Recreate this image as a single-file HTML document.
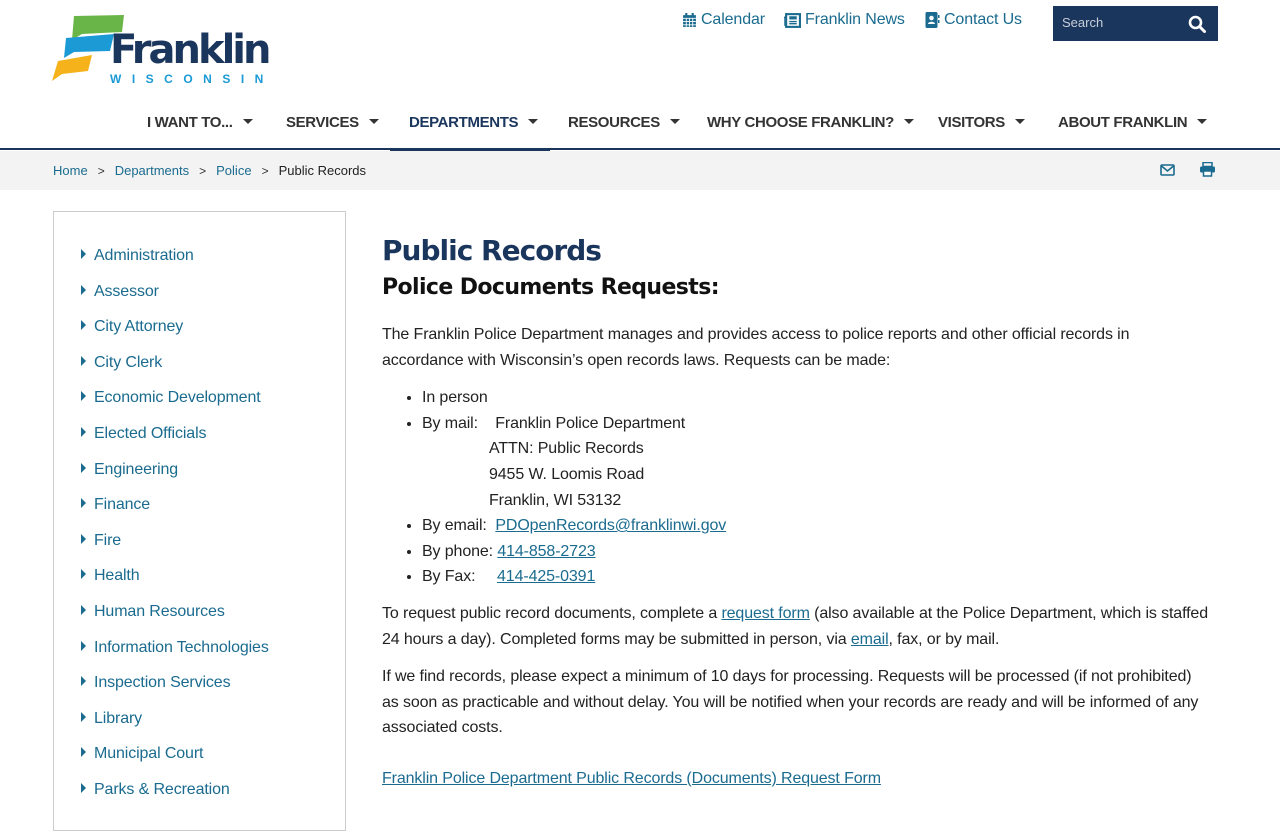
<!DOCTYPE html>
<html><head><meta charset="utf-8"><style>
*{box-sizing:border-box;margin:0;padding:0}
body{width:1280px;height:800px;overflow:hidden;background:#fff;font-family:"Liberation Sans",sans-serif;color:#222;letter-spacing:-0.12px}
a{color:#1a6b8f;text-decoration:underline}
.top{position:absolute;top:11px;font-size:16px;color:#1a6b8f;display:flex;align-items:center;gap:4px}
.search{position:absolute;left:1053px;top:6px;width:165px;height:35px;background:#1b365d;color:#c8cfd9;font-size:13px;padding:9px 0 0 9px;letter-spacing:0}
.nav{position:absolute;top:0;left:0;width:1280px;height:150px;border-bottom:2px solid #1b365d}
.nav span{position:absolute;top:114px;font-size:15px;font-weight:bold;color:#333;letter-spacing:-0.35px}
.nav span:after{content:"";display:inline-block;margin-left:10px;border-left:5px solid transparent;border-right:5px solid transparent;border-top:5px solid #333;vertical-align:3px}
.nav span.act{color:#1b365d}
.crumb{position:absolute;top:151px;left:0;width:1280px;height:39px;background:#f3f3f3;font-size:13px;padding:12px 0 0 53px;letter-spacing:0}
.crumb a{text-decoration:none;color:#1a6b8f}
.crumb i{font-style:normal;margin:0 10px;color:#333;font-size:12px}
.side{position:absolute;left:53px;top:211px;width:293px;height:620px;border:1px solid #ccc}
.side div{position:absolute;left:27px;top:0;font-size:16px;color:#1a6b8f;margin-top:1px}
.side div:before{content:"";display:inline-block;border-top:5px solid transparent;border-bottom:5px solid transparent;border-left:5px solid #1a6b8f;margin-right:8px;vertical-align:1px}
.main{position:absolute;left:382px;top:232px;width:850px;font-size:16px;line-height:25.6px}
h1{font-family:"DejaVu Sans",sans-serif;font-weight:bold;color:#1b365d;font-size:28px;line-height:38px;letter-spacing:-1px}
h2{font-family:"DejaVu Sans",sans-serif;font-size:22px;line-height:36px;color:#111;margin-bottom:16px;letter-spacing:-0.6px}
p{margin-bottom:12px}
ul{margin:0 0 11px 40px}
</style></head><body>
<div class="nav">
<span style="left:147px">I WANT TO...</span>
<span style="left:286px">SERVICES</span>
<span class="act" style="left:409px">DEPARTMENTS</span>
<span style="left:568px">RESOURCES</span>
<span style="left:707px">WHY CHOOSE FRANKLIN?</span>
<span style="left:938px">VISITORS</span>
<span style="left:1058px">ABOUT FRANKLIN</span>
</div>
<div style="position:absolute;left:390px;top:148px;width:160px;height:4px;background:#1b365d"></div>
<svg style="position:absolute;left:52px;top:14px" width="80" height="68" viewBox="0 0 80 68">
<path d="M22 2 L72 1 L70 18 L30 20 L20 26 Z" fill="#6ab547"/>
<path d="M14 24 L62 20 L58 37 L22 38 L12 44 Z" fill="#1b9ad6"/>
<path d="M6 47 L40 41 L36 57 L10 60 L0 67 Z" fill="#f5b21b"/>
</svg>
<div style="position:absolute;left:110px;top:27px;font-family:'DejaVu Sans',sans-serif;font-size:40px;font-weight:bold;color:#1b365d;letter-spacing:-3px;line-height:46px">Franklin</div>
<div style="position:absolute;left:110px;top:72px;font-size:12px;font-weight:bold;color:#1b9ad6;letter-spacing:10.5px">WISCONSIN</div>
<div class="top" style="left:682px"><svg width="15" height="15" viewBox="0 0 14 14"><rect x="1" y="2" width="12" height="11" fill="#1a6b8f"/><path d="M1 5h12M1 8h12M1 11h12M4 5v8M7 5v8M10 5v8" stroke="#fff" stroke-width=".8"/><rect x="3" y="0" width="2" height="3" fill="#1a6b8f"/><rect x="9" y="0" width="2" height="3" fill="#1a6b8f"/></svg>Calendar</div>
<div class="top" style="left:784px"><svg width="17" height="15" viewBox="0 0 16 14"><rect x="2" y="1" width="13" height="12" fill="none" stroke="#1a6b8f" stroke-width="2"/><rect x="5" y="3" width="7" height="3" fill="#1a6b8f"/><path d="M5 8h7M5 10h7M2 4H0v8" stroke="#1a6b8f" stroke-width="1.4" fill="none"/></svg>Franklin News</div>
<div class="top" style="left:925px"><svg width="15" height="16" viewBox="0 0 14 16"><rect x="0" y="0" width="12" height="16" rx="1.5" fill="#1a6b8f"/><circle cx="6" cy="6" r="2.3" fill="#fff"/><path d="M2.5 12c0-3 7-3 7 0z" fill="#fff"/><rect x="12.5" y="3" width="1.5" height="3" fill="#1a6b8f"/><rect x="12.5" y="8" width="1.5" height="3" fill="#1a6b8f"/></svg>Contact Us</div>
<div class="search">Search<svg style="position:absolute;right:12px;top:9px" width="18" height="18" viewBox="0 0 18 18"><circle cx="7.5" cy="7.5" r="5.5" fill="none" stroke="#fff" stroke-width="2.6"/><path d="M11.5 11.5L16.5 16.5" stroke="#fff" stroke-width="3" stroke-linecap="round"/></svg></div>
<div class="crumb"><a>Home</a><i>&gt;</i><a>Departments</a><i>&gt;</i><a>Police</a><i>&gt;</i><span style="color:#222">Public Records</span></div>
<svg style="position:absolute;left:1160px;top:164px" width="15" height="12" viewBox="0 0 15 12"><rect x="1" y="1" width="13" height="10" rx="1" fill="none" stroke="#1a6b8f" stroke-width="1.6"/><path d="M1.5 2L7.5 7 13.5 2" fill="none" stroke="#1a6b8f" stroke-width="1.6"/></svg>
<svg style="position:absolute;left:1200px;top:162px" width="15" height="15" viewBox="0 0 15 15"><rect x="3" y="0.5" width="9" height="4" fill="none" stroke="#1a6b8f" stroke-width="1.5"/><rect x="0" y="4.5" width="15" height="6" rx="1.5" fill="#1a6b8f"/><rect x="3.5" y="9" width="8" height="5" fill="#fff" stroke="#1a6b8f" stroke-width="1.5"/></svg>
<div class="side">
<div style="top:34px">Administration</div>
<div style="top:70px">Assessor</div>
<div style="top:105px">City Attorney</div>
<div style="top:141px">City Clerk</div>
<div style="top:176px">Economic Development</div>
<div style="top:212px">Elected Officials</div>
<div style="top:248px">Engineering</div>
<div style="top:283px">Finance</div>
<div style="top:319px">Fire</div>
<div style="top:354px">Health</div>
<div style="top:390px">Human Resources</div>
<div style="top:426px">Information Technologies</div>
<div style="top:461px">Inspection Services</div>
<div style="top:497px">Library</div>
<div style="top:532px">Municipal Court</div>
<div style="top:568px">Parks &amp; Recreation</div>
</div>
<div class="main">
<h1>Public Records</h1>
<h2>Police Documents Requests:</h2>
<p>The Franklin Police Department manages and provides access to police reports and other official records in<br>accordance with Wisconsin’s open records laws. Requests can be made:</p>
<ul>
<li>In person</li>
<li>By mail:&nbsp;&nbsp;&nbsp; Franklin Police Department<br><span style="padding-left:67px">ATTN: Public Records</span><br><span style="padding-left:67px">9455 W. Loomis Road</span><br><span style="padding-left:67px">Franklin, WI 53132</span></li>
<li>By email:&nbsp; <a>PDOpenRecords@franklinwi.gov</a></li>
<li>By phone: <a>414-858-2723</a></li>
<li>By Fax:&nbsp;&nbsp;&nbsp;&nbsp; <a>414-425-0391</a></li>
</ul>
<p>To request public record documents, complete a <a>request form</a> (also available at the Police Department, which is staffed<br>24 hours a day). Completed forms may be submitted in person, via <a>email</a>, fax, or by mail.</p>
<p style="margin-bottom:25px">If we find records, please expect a minimum of 10 days for processing. Requests will be processed (if not prohibited)<br>as soon as practicable and without delay. You will be notified when your records are ready and will be informed of any<br>associated costs.</p>
<p><a>Franklin Police Department Public Records (Documents) Request Form</a></p>
</div>
</body></html>
